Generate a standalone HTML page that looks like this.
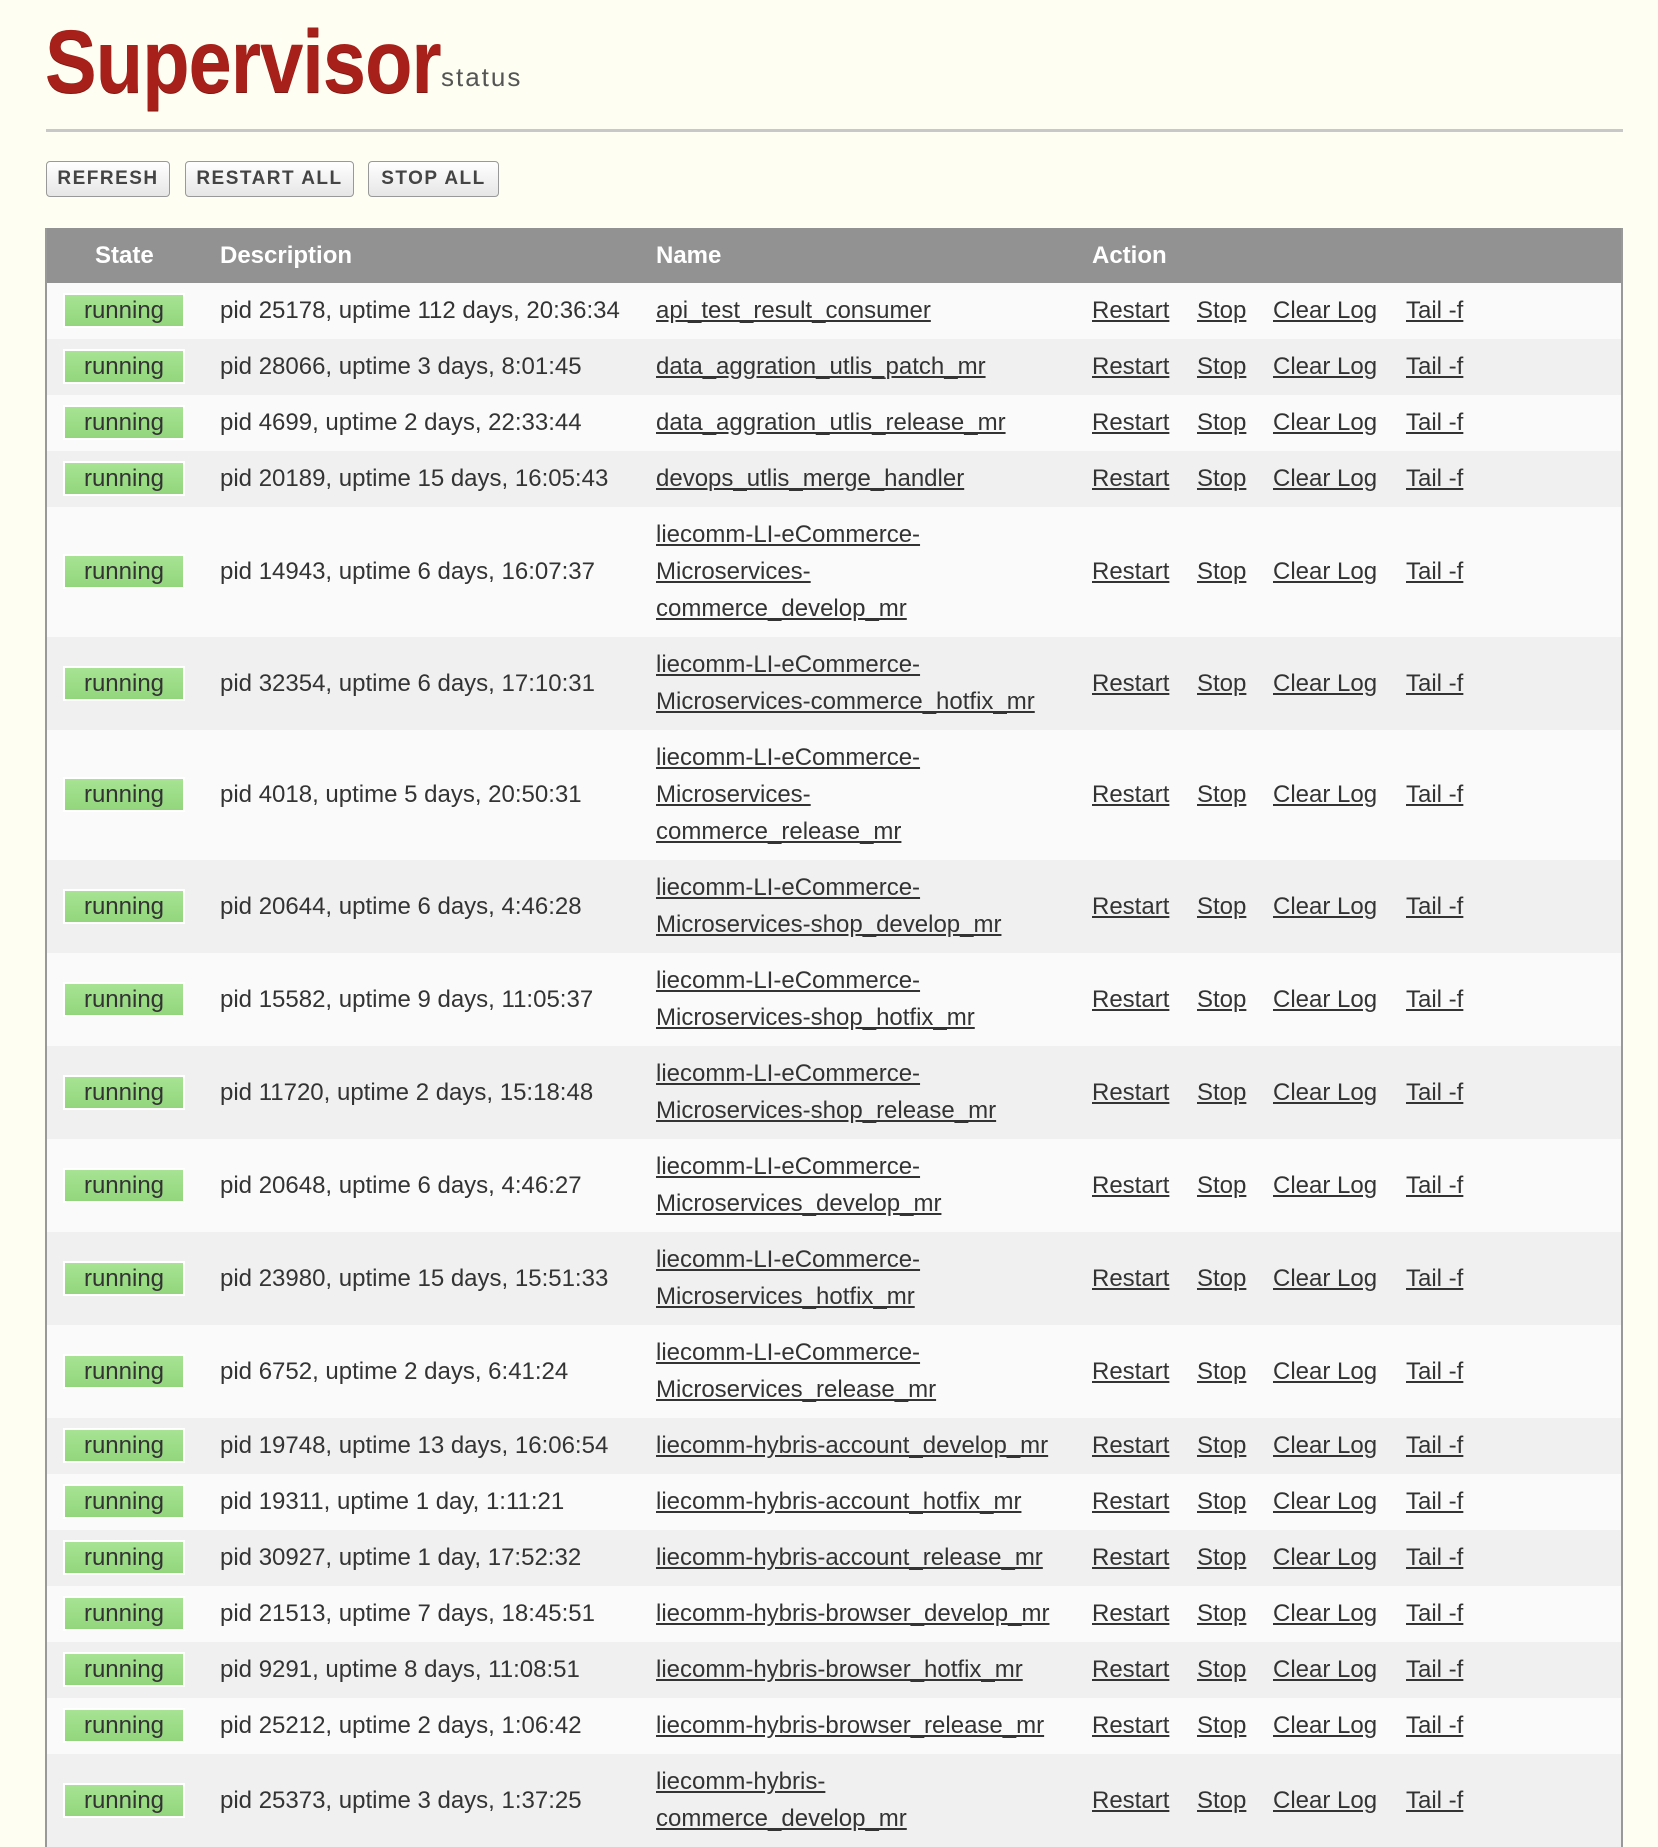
<!DOCTYPE html>
<html><head><meta charset="utf-8"><style>
html,body{margin:0;padding:0;background:#fefef2;width:1658px;height:1772px;overflow:hidden;font-family:"Liberation Sans",Arial,sans-serif;color:#333}
.logo{position:absolute;left:45px;top:6px;font-size:89px;font-weight:bold;color:#a8201a;transform:scaleX(0.87);transform-origin:0 0;letter-spacing:-1px;line-height:110px;text-shadow:0 1px 0 #7c1712}
.status{position:absolute;left:441px;top:62px;font-size:26px;color:#555;letter-spacing:2px}
.hr{position:absolute;left:46px;width:1577px;top:129px;height:3px;background:#c8c8c8}
.btn{position:absolute;top:161px;border:1px solid #999;border-radius:4px;background:linear-gradient(#fff,#e6e6e6);font-size:19px;font-weight:bold;color:#444;letter-spacing:1.5px;line-height:34px;text-align:center;box-sizing:border-box;height:36px}
table{position:absolute;left:45px;top:228px;width:1578px;border-collapse:collapse;table-layout:fixed;border-left:2px solid #999;border-right:2px solid #999}
th{background:#929292;color:#fff;font-size:24px;text-align:left;height:55px;padding:0}
td{font-size:24px;line-height:37px;padding:9px 0 10px;vertical-align:middle;white-space:nowrap}
tr.a td{background:#fafafa}tr.b td{background:#f0f0f0}
.badge{display:inline-block;width:118px;height:31px;line-height:31px;background:linear-gradient(#a7e393,#92d67c);text-align:center;color:#333;border:2px solid #fff;margin-left:16px}
a{color:#333;text-decoration:underline}
.act a{display:inline-block}
</style></head><body>
<div class="logo">Supervisor</div>
<div class="status">status</div>
<div class="hr"></div>
<div class="btn" style="left:46px;width:124px">REFRESH</div>
<div class="btn" style="left:185px;width:169px">RESTART ALL</div>
<div class="btn" style="left:368px;width:131px">STOP ALL</div>
<table>
<colgroup><col style="width:174px"><col style="width:436px"><col style="width:436px"><col></colgroup>
<tr><th style="padding-left:48px">State</th><th>Description</th><th>Name</th><th>Action</th></tr>
<tr class="a"><td><span class="badge">running</span></td><td>pid 25178, uptime 112 days, 20:36:34</td><td><a>api_test_result_consumer</a></td><td class="act"><a style="width:105px">Restart</a><a style="width:76px">Stop</a><a style="width:133px">Clear Log</a><a>Tail -f</a></td></tr>
<tr class="b"><td><span class="badge">running</span></td><td>pid 28066, uptime 3 days, 8:01:45</td><td><a>data_aggration_utlis_patch_mr</a></td><td class="act"><a style="width:105px">Restart</a><a style="width:76px">Stop</a><a style="width:133px">Clear Log</a><a>Tail -f</a></td></tr>
<tr class="a"><td><span class="badge">running</span></td><td>pid 4699, uptime 2 days, 22:33:44</td><td><a>data_aggration_utlis_release_mr</a></td><td class="act"><a style="width:105px">Restart</a><a style="width:76px">Stop</a><a style="width:133px">Clear Log</a><a>Tail -f</a></td></tr>
<tr class="b"><td><span class="badge">running</span></td><td>pid 20189, uptime 15 days, 16:05:43</td><td><a>devops_utlis_merge_handler</a></td><td class="act"><a style="width:105px">Restart</a><a style="width:76px">Stop</a><a style="width:133px">Clear Log</a><a>Tail -f</a></td></tr>
<tr class="a"><td><span class="badge">running</span></td><td>pid 14943, uptime 6 days, 16:07:37</td><td><a>liecomm-LI-eCommerce-<br>Microservices-<br>commerce_develop_mr</a></td><td class="act"><a style="width:105px">Restart</a><a style="width:76px">Stop</a><a style="width:133px">Clear Log</a><a>Tail -f</a></td></tr>
<tr class="b"><td><span class="badge">running</span></td><td>pid 32354, uptime 6 days, 17:10:31</td><td><a>liecomm-LI-eCommerce-<br>Microservices-commerce_hotfix_mr</a></td><td class="act"><a style="width:105px">Restart</a><a style="width:76px">Stop</a><a style="width:133px">Clear Log</a><a>Tail -f</a></td></tr>
<tr class="a"><td><span class="badge">running</span></td><td>pid 4018, uptime 5 days, 20:50:31</td><td><a>liecomm-LI-eCommerce-<br>Microservices-<br>commerce_release_mr</a></td><td class="act"><a style="width:105px">Restart</a><a style="width:76px">Stop</a><a style="width:133px">Clear Log</a><a>Tail -f</a></td></tr>
<tr class="b"><td><span class="badge">running</span></td><td>pid 20644, uptime 6 days, 4:46:28</td><td><a>liecomm-LI-eCommerce-<br>Microservices-shop_develop_mr</a></td><td class="act"><a style="width:105px">Restart</a><a style="width:76px">Stop</a><a style="width:133px">Clear Log</a><a>Tail -f</a></td></tr>
<tr class="a"><td><span class="badge">running</span></td><td>pid 15582, uptime 9 days, 11:05:37</td><td><a>liecomm-LI-eCommerce-<br>Microservices-shop_hotfix_mr</a></td><td class="act"><a style="width:105px">Restart</a><a style="width:76px">Stop</a><a style="width:133px">Clear Log</a><a>Tail -f</a></td></tr>
<tr class="b"><td><span class="badge">running</span></td><td>pid 11720, uptime 2 days, 15:18:48</td><td><a>liecomm-LI-eCommerce-<br>Microservices-shop_release_mr</a></td><td class="act"><a style="width:105px">Restart</a><a style="width:76px">Stop</a><a style="width:133px">Clear Log</a><a>Tail -f</a></td></tr>
<tr class="a"><td><span class="badge">running</span></td><td>pid 20648, uptime 6 days, 4:46:27</td><td><a>liecomm-LI-eCommerce-<br>Microservices_develop_mr</a></td><td class="act"><a style="width:105px">Restart</a><a style="width:76px">Stop</a><a style="width:133px">Clear Log</a><a>Tail -f</a></td></tr>
<tr class="b"><td><span class="badge">running</span></td><td>pid 23980, uptime 15 days, 15:51:33</td><td><a>liecomm-LI-eCommerce-<br>Microservices_hotfix_mr</a></td><td class="act"><a style="width:105px">Restart</a><a style="width:76px">Stop</a><a style="width:133px">Clear Log</a><a>Tail -f</a></td></tr>
<tr class="a"><td><span class="badge">running</span></td><td>pid 6752, uptime 2 days, 6:41:24</td><td><a>liecomm-LI-eCommerce-<br>Microservices_release_mr</a></td><td class="act"><a style="width:105px">Restart</a><a style="width:76px">Stop</a><a style="width:133px">Clear Log</a><a>Tail -f</a></td></tr>
<tr class="b"><td><span class="badge">running</span></td><td>pid 19748, uptime 13 days, 16:06:54</td><td><a>liecomm-hybris-account_develop_mr</a></td><td class="act"><a style="width:105px">Restart</a><a style="width:76px">Stop</a><a style="width:133px">Clear Log</a><a>Tail -f</a></td></tr>
<tr class="a"><td><span class="badge">running</span></td><td>pid 19311, uptime 1 day, 1:11:21</td><td><a>liecomm-hybris-account_hotfix_mr</a></td><td class="act"><a style="width:105px">Restart</a><a style="width:76px">Stop</a><a style="width:133px">Clear Log</a><a>Tail -f</a></td></tr>
<tr class="b"><td><span class="badge">running</span></td><td>pid 30927, uptime 1 day, 17:52:32</td><td><a>liecomm-hybris-account_release_mr</a></td><td class="act"><a style="width:105px">Restart</a><a style="width:76px">Stop</a><a style="width:133px">Clear Log</a><a>Tail -f</a></td></tr>
<tr class="a"><td><span class="badge">running</span></td><td>pid 21513, uptime 7 days, 18:45:51</td><td><a>liecomm-hybris-browser_develop_mr</a></td><td class="act"><a style="width:105px">Restart</a><a style="width:76px">Stop</a><a style="width:133px">Clear Log</a><a>Tail -f</a></td></tr>
<tr class="b"><td><span class="badge">running</span></td><td>pid 9291, uptime 8 days, 11:08:51</td><td><a>liecomm-hybris-browser_hotfix_mr</a></td><td class="act"><a style="width:105px">Restart</a><a style="width:76px">Stop</a><a style="width:133px">Clear Log</a><a>Tail -f</a></td></tr>
<tr class="a"><td><span class="badge">running</span></td><td>pid 25212, uptime 2 days, 1:06:42</td><td><a>liecomm-hybris-browser_release_mr</a></td><td class="act"><a style="width:105px">Restart</a><a style="width:76px">Stop</a><a style="width:133px">Clear Log</a><a>Tail -f</a></td></tr>
<tr class="b"><td><span class="badge">running</span></td><td>pid 25373, uptime 3 days, 1:37:25</td><td><a>liecomm-hybris-<br>commerce_develop_mr</a></td><td class="act"><a style="width:105px">Restart</a><a style="width:76px">Stop</a><a style="width:133px">Clear Log</a><a>Tail -f</a></td></tr>
</table>
</body></html>
